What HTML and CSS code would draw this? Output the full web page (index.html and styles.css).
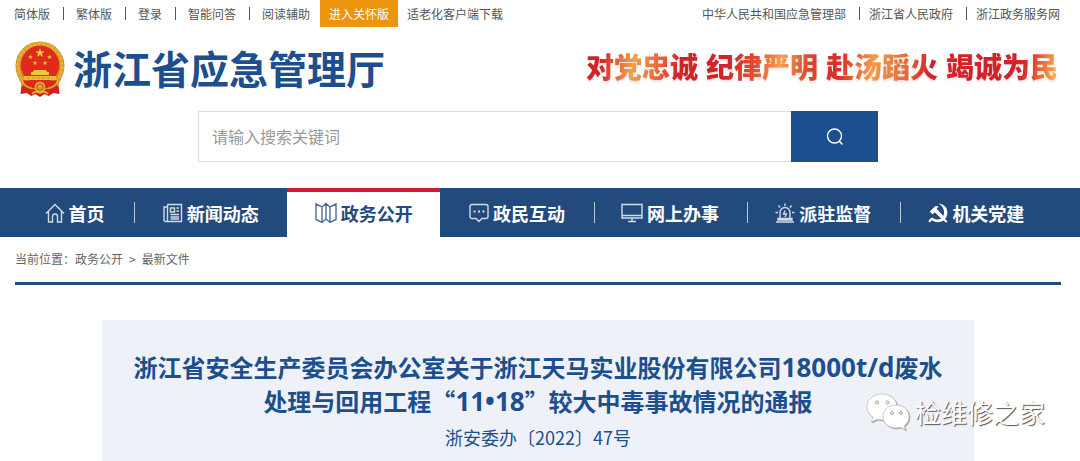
FILE: index.html
```
<!DOCTYPE html>
<html lang="zh-CN">
<head>
    <meta charset="UTF-8">
    <meta name="viewport" content="width=device-width, initial-scale=1.0">
    <title>浙江省应急管理厅</title>
    <link rel="stylesheet" href="styles.css">
</head>
<body>
    <div class="topbar">
        <div class="top-links">
            <a href="#">简体版</a>
            <a href="#">繁体版</a>
            <a href="#">登录</a>
            <a href="#">智能问答</a>
            <a href="#">阅读辅助</a>
        </div>
        <a class="care" href="#">进入关怀版</a>
        <a class="download" href="#">适老化客户端下载</a>
        <div class="top-links gov-links">
            <a href="#">中华人民共和国应急管理部</a>
            <a href="#">浙江省人民政府</a>
            <a href="#">浙江政务服务网</a>
        </div>
    </div>

    <header class="header">
        <a class="logo" href="#">
            <svg class="emblem" viewBox="0 0 50 56" aria-hidden="true">
                <defs>
                    <polygon id="star" points="0,-5 1.2,-1.6 4.8,-1.5 1.9,.6 2.9,4 0,2 -2.9,4 -1.9,.6 -4.8,-1.5 -1.2,-1.6" fill="#f7cf3c"/>
                </defs>
                <path d="M7 40 5.500 53l6-1 5 3 4-2 4.500 3 4.500-3 4 2 5-3 6 1L43 40z" fill="#cf2018"/>
                <ellipse cx="25" cy="25" rx="24.5" ry="24.5" fill="#c98b1c"/>
                <ellipse cx="25" cy="25" rx="22" ry="22.3" fill="none" stroke="#e5ae3a" stroke-width="3.500" stroke-dasharray="4 .6"/>
                <circle cx="25" cy="24" r="19.2" fill="#e2291d"/>
                <use href="#star" x="25" y="12"/>
                <use href="#star" transform="translate(15.5 16) scale(.5)"/>
                <use href="#star" transform="translate(34.5 16) scale(.5)"/>
                <use href="#star" transform="translate(20 22) scale(.5)"/>
                <use href="#star" transform="translate(30 22) scale(.5)"/>
                <path d="M18 31l1-2h12l1 2zM16 34v-3h18v3z" fill="#f4c544"/>
                <path d="M9 35h32v4H9z" fill="#efb93a"/>
                <path d="M12 37h26" stroke="#d98f2a" stroke-width="1" stroke-dasharray="3 2"/>
                <path d="M8 39q17 4 34 0l-3 6q-14 6-28 0z" fill="#d82a1b"/>
                <path d="M3 34q4 10 15 13l-3 4Q5 46 3 34zM47 34q-4 10-15 13l3 4q10-5 12-17z" fill="#dfa12c"/>
                <circle cx="25" cy="46" r="5.5" fill="#e0a32c"/>
                <circle cx="25" cy="46" r="3" fill="none" stroke="#c4531c" stroke-width="1"/>
                <path d="M8 44q6 5 11 4l-3 5-4-3-6 2zM42 44q-6 5-11 4l3 5 4-3 6 2z" fill="#d1261a"/>
                <path d="M17 53q3-4 8-1 5-3 8 1" fill="none" stroke="#e9ae33" stroke-width="2"/>
            </svg>
            <h1>浙江省应急管理厅</h1>
        </a>
        <p class="slogan">
            <span class="warm-mid">对党忠诚</span>
            <span class="warm-third">纪律严明</span>
            <span class="warm-left">赴汤蹈火</span>
            <span class="warm-end">竭诚为民</span>
        </p>
    </header>

    <form class="search" role="search">
        <input type="text" placeholder="请输入搜索关键词" aria-label="请输入搜索关键词">
        <button type="submit" aria-label="搜索">
            <svg viewBox="0 0 18 18" width="18" height="18" fill="none" stroke="currentColor" stroke-width="1.4">
                <circle cx="8.5" cy="8" r="7"/>
                <path d="M13 13l3.5 3.5"/>
            </svg>
        </button>
    </form>

    <nav class="nav">
        <a class="home" href="#">
            <svg viewBox="0 0 20 20" width="20" height="20">
                <path d="M1 10.500 10 1.500l9 9M3.500 8.500V19h4v-5.500a2.500 2.500 0 0 1 5 0V19h4V8.500"/>
            </svg>
            首页
        </a>
        <a href="#">
            <svg viewBox="0 0 20 20" width="20" height="20">
                <path d="M4.500 1.500h14v17h-16a1.500 1.500 0 0 1-1.500-1.500V4h3.500M4.500 1.500V17a1.500 1.500 0 0 1-2 1.500"/>
                <path d="M7.500 5h4v4h-4zM13.500 5H16M13.500 8H16M7.500 11.500H16M7.500 14H16M7.500 16H16"/>
            </svg>
            新闻动态
        </a>
        <a class="active" href="#" aria-current="page">
            <svg viewBox="0 0 22 22" width="22" height="22">
                <path d="M1 2l6 3 4-3.500 4 3.500 6-3v15.500l-6 3-4-3.500-4 3.500-6-3zM7 5v15M11 1.500V17M15 5v15"/>
            </svg>
            政务公开
        </a>
        <a href="#">
            <svg viewBox="0 0 20 20" width="20" height="20">
                <path d="M3 1.500h14a2 2 0 0 1 2 2v10a2 2 0 0 1-2 2h-4L10 18.500 7 15.500H3a2 2 0 0 1-2-2v-10a2 2 0 0 1 2-2z"/>
                <path d="M4.500 8.500h2M9 8.500h2M13.500 8.500h2" stroke-width="2"/>
            </svg>
            政民互动
        </a>
        <a href="#">
            <svg viewBox="0 0 22 20" width="22" height="20">
                <path d="M1 1.500h20V15H1zM1 12.500h20M11 15v3M7 18.500h8"/>
            </svg>
            网上办事
        </a>
        <a href="#">
            <svg viewBox="0 0 20 20" width="20" height="20">
                <path d="M5 15.500V9.500a5 5 0 0 1 10 0v6M3 15.500h14v1.500H3zM1 19h18M10 .5v2.500M3.500 2.500 5 4.500M16.500 2.500 15 4.500M.5 9.500H3M17 9.500h2.500"/>
                <path d="M10 7.500 8.500 11h3L10 14"/>
            </svg>
            派驻监督
        </a>
        <a href="#">
            <svg class="solid" viewBox="0 0 20 20" width="20" height="20">
                <path d="M10.500.5C17 1 20 6 19.300 11c-.3 2.200-1.200 3.700-2.300 5l2.500 2.300-1.400 1.500-2.600-2.200C11.500 20 7 19.500 4 17.300L1.800 19.500.3 18l2.400-2.700 1.500-.7c3.200 2.500 6.600 2.500 9 1L6.700 9.300 4.500 11.500 1.800 8.500 7.500 3l3.200.4-2 2.300 6.600 7.300C17.300 8.500 15.500 3.500 10.500.5z"/>
            </svg>
            机关党建
        </a>
    </nav>

    <div class="crumbs">
        <span>当前位置：</span><a href="#">政务公开</a><span class="arrow">&gt;</span><a href="#">最新文件</a>
    </div>

    <main class="content">
        <article class="notice">
            <h2>浙江省安全生产委员会办公室关于浙江天马实业股份有限公司<span class="latin">18000t/d</span>废水<br>处理与回用工程“<span class="latin">11•18</span>”较大中毒事故情况的通报</h2>
            <p>浙安委办〔2022〕47号</p>
        </article>
        <div class="watermark">
            <svg viewBox="0 0 44 38" width="44" height="38" aria-hidden="true">
                <path d="M16 1C7.500 1 1 6.500 1 14c0 4.300 2.200 7.700 5.800 10L5.500 29l5.700-2.800c1.700.5 3.300.8 5.300.8C24.500 27 31 21.500 31 14S24.500 1 16 1z"/>
                <path d="M30 12c-7.500 0-13 5-13 11.500S22.500 35 30 35c1.500 0 3-.3 4.500-.7L39.500 37l-1.200-4.200C41.300 30.700 43 27.500 43 23.500 43 17 37.500 12 30 12z"/>
                <g class="eyes">
                    <circle cx="11" cy="9.500" r="1.600"/>
                    <circle cx="21.500" cy="9.500" r="1.600"/>
                    <circle cx="26" cy="20" r="1.500"/>
                    <circle cx="35" cy="20" r="1.500"/>
                </g>
            </svg>
            <span>检维修之家</span>
        </div>
    </main>
</body>
</html>
```
FILE: styles.css
```
* {
    box-sizing: border-box;
}
body {
    margin: 0;
    background-color: #fff;
    color: #555;
    font-family: "Noto Sans CJK SC", sans-serif;
    font-size: 12px;
}
h1, h2, p {
    margin: 0;
}
a {
    color: inherit;
    text-decoration: none;
}

/* top bar */
.topbar {
    display: flex;
    align-items: center;
    height: 27px;
    padding: 0 20px 0 14px;
}
.top-links {
    display: flex;
    align-items: center;
}
.top-links a {
    line-height: 13px;
}
.top-links a + a {
    margin-left: 13px;
    padding-left: 12px;
    border-left: 1px solid #555;
}
.care {
    margin-left: 10px;
    padding: 0 9px;
    line-height: 27px;
    background-color: #ec940d;
    color: #fff;
}
.download {
    margin-left: 9px;
}
.gov-links {
    margin-left: auto;
}
.gov-links a + a {
    padding-left: 9px;
}

/* header */
.header {
    display: flex;
    align-items: flex-start;
    justify-content: space-between;
    height: 84px;
    padding: 14px 22px 0 15px;
}
.logo {
    display: flex;
    align-items: flex-start;
    gap: 8px;
}
.emblem {
    width: 50px;
    height: 56px;
}
.logo h1 {
    font-size: 39px;
    line-height: 52px;
    color: #1d4f8e;
}
.slogan {
    display: flex;
    gap: 8px;
    font-size: 28px;
    font-weight: 900;
    line-height: 50px;
}
.slogan span {
    background-clip: text;
    -webkit-background-clip: text;
    color: transparent;
    filter: drop-shadow(0 2px 1px #e4e4e4);
}
.warm-mid {
    background-image: linear-gradient(100deg, #d2232a 15%, #f3a04a 42%, #e8643a 65%, #d2232a 80%);
}
.warm-third {
    background-image: linear-gradient(100deg, #d2232a 20%, #e2502f 45%, #f6a04c 65%, #d8432d 90%);
}
.warm-left {
    background-image: linear-gradient(100deg, #d8302a 15%, #f59a45 42%, #ea6a38 70%, #d2232a 90%);
}
.warm-end {
    background-image: linear-gradient(100deg, #d2232a 65%, #e0452d 76%, #f7b04e 96%);
}

/* search */
.search {
    display: flex;
    height: 51px;
    margin-bottom: 26px;
    padding: 0 202px 0 198px;
}
.search input {
    flex: 1;
    min-width: 0;
    padding: 0 13px 2px;
    border: 1px solid #ddd;
    border-right: 0;
    border-radius: 0;
    font-family: inherit;
    font-size: 16px;
}
.search input::placeholder {
    color: #999;
}
.search button {
    display: flex;
    align-items: center;
    justify-content: center;
    width: 87px;
    border: 0;
    background-color: #1c4f8f;
    color: #fff;
}

/* main menu */
.nav {
    display: flex;
    height: 49px;
    padding: 0 27px 0 15px;
    background-color: #234a7d;
    color: #fff;
    font-size: 18px;
    font-weight: bold;
    line-height: 24px;
}
.nav a {
    display: flex;
    flex: 153 0 0;
    align-items: center;
    justify-content: center;
    gap: 4px;
}
.nav .home {
    flex-grow: 119;
}
.nav a::before {
    content: "";
    width: 1px;
    height: 21px;
    margin-right: auto;
    background-color: #b9c7da;
}
.nav a::after {
    content: "";
    width: 1px;
    margin-left: auto;
}
.nav .home::before,
.nav .active::before,
.nav .active + a::before {
    background-color: transparent;
}
.nav .active {
    border-top: 4px solid #cf1c35;
    padding-bottom: 4px;
    background-color: #fff;
    color: #234a7d;
}
.nav svg {
    fill: none;
    stroke: currentColor;
    stroke-width: 1.4;
    opacity: 0.8;
}
.nav .solid {
    fill: currentColor;
    stroke: none;
    opacity: 1;
}

/* breadcrumb */
.crumbs {
    margin: 0 19px 0 15px;
    padding-bottom: 1px;
    line-height: 44px;
    border-bottom: 3px solid #234a7d;
    color: #666;
}
.arrow {
    margin: 0 6px;
}

/* notice */
.content {
    position: relative;
    padding: 35px 106px 0 102px;
}
.notice {
    padding: 30px 20px 10px;
    background-color: #eef2f8;
    color: #1d4f8e;
    text-align: center;
}
.notice h2 {
    font-size: 24px;
    line-height: 34px;
}
.notice p {
    margin-top: 5px;
    font-size: 18px;
    line-height: 28px;
}
.latin {
    font-family: "Open Sans", sans-serif;
    font-size: 26px;
    line-height: 24px;
}

/* account mark over the notice */
.watermark {
    position: absolute;
    right: 35px;
    bottom: 30px;
    display: flex;
    align-items: center;
    gap: 5px;
    color: #fff;
    font-size: 26px;
    line-height: 34px;
    text-shadow: 1px 1px 1px #555;
}
.watermark svg {
    fill: #fff;
    stroke: #aaa;
    stroke-width: 0.6;
    filter: drop-shadow(1px 1px 0 #aaa);
}
.watermark .eyes {
    fill: #eee;
    stroke: #777;
}
```
